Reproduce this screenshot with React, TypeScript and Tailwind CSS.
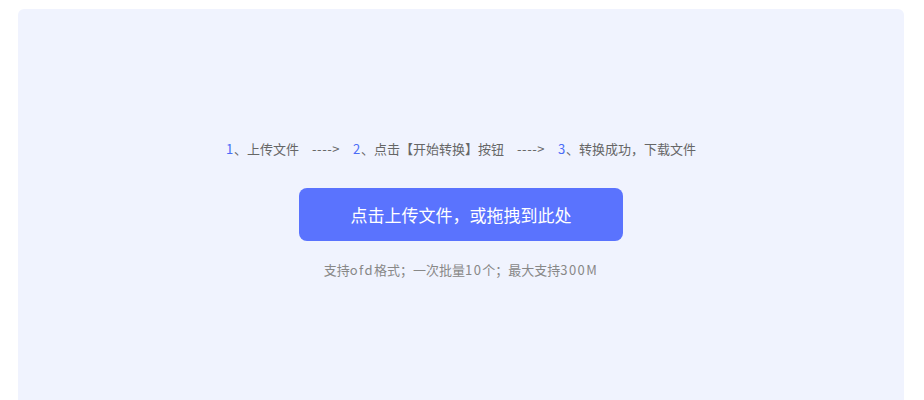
export default function App() {
  return (
    <div className="h-[400px] w-[924px] overflow-hidden bg-white pl-[18px] pr-[20px] pt-[9px] font-['Noto_Sans_CJK_SC','Noto_Sans',sans-serif]">
      <div className="flex h-[420px] flex-col items-center rounded-t-[6px] bg-[#f0f3fe] pt-[130px]">
        <p className="flex items-center text-[13px] leading-[20px] text-[#666]">
          <span className="text-[#4a6cf7] tracking-[1px]">1</span>
          <span>、上传文件</span>
          <span className="mx-[13px] tracking-[0.5px]">----&gt;</span>
          <span className="text-[#4a6cf7] tracking-[1px]">2</span>
          <span>、点击【开始转换】按钮</span>
          <span className="mx-[13px] tracking-[0.5px]">----&gt;</span>
          <span className="text-[#4a6cf7] tracking-[1px]">3</span>
          <span>、转换成功，下载文件</span>
        </p>
        <button
          type="button"
          className="mt-[29px] flex h-[53px] w-[324px] items-center justify-center rounded-[8px] bg-[#5a73fe] text-[17px] text-white"
        >
          点击上传文件，或拖拽到此处
        </button>
        <p className="mt-[19px] text-[13px] leading-[20px] text-[#888]">
          支持<span className="tracking-[1.4px]">ofd</span>格式；一次批量
          <span className="tracking-[1.4px]">10</span>个；最大支持
          <span className="tracking-[1.4px]">300M</span>
        </p>
      </div>
    </div>
  );
}
